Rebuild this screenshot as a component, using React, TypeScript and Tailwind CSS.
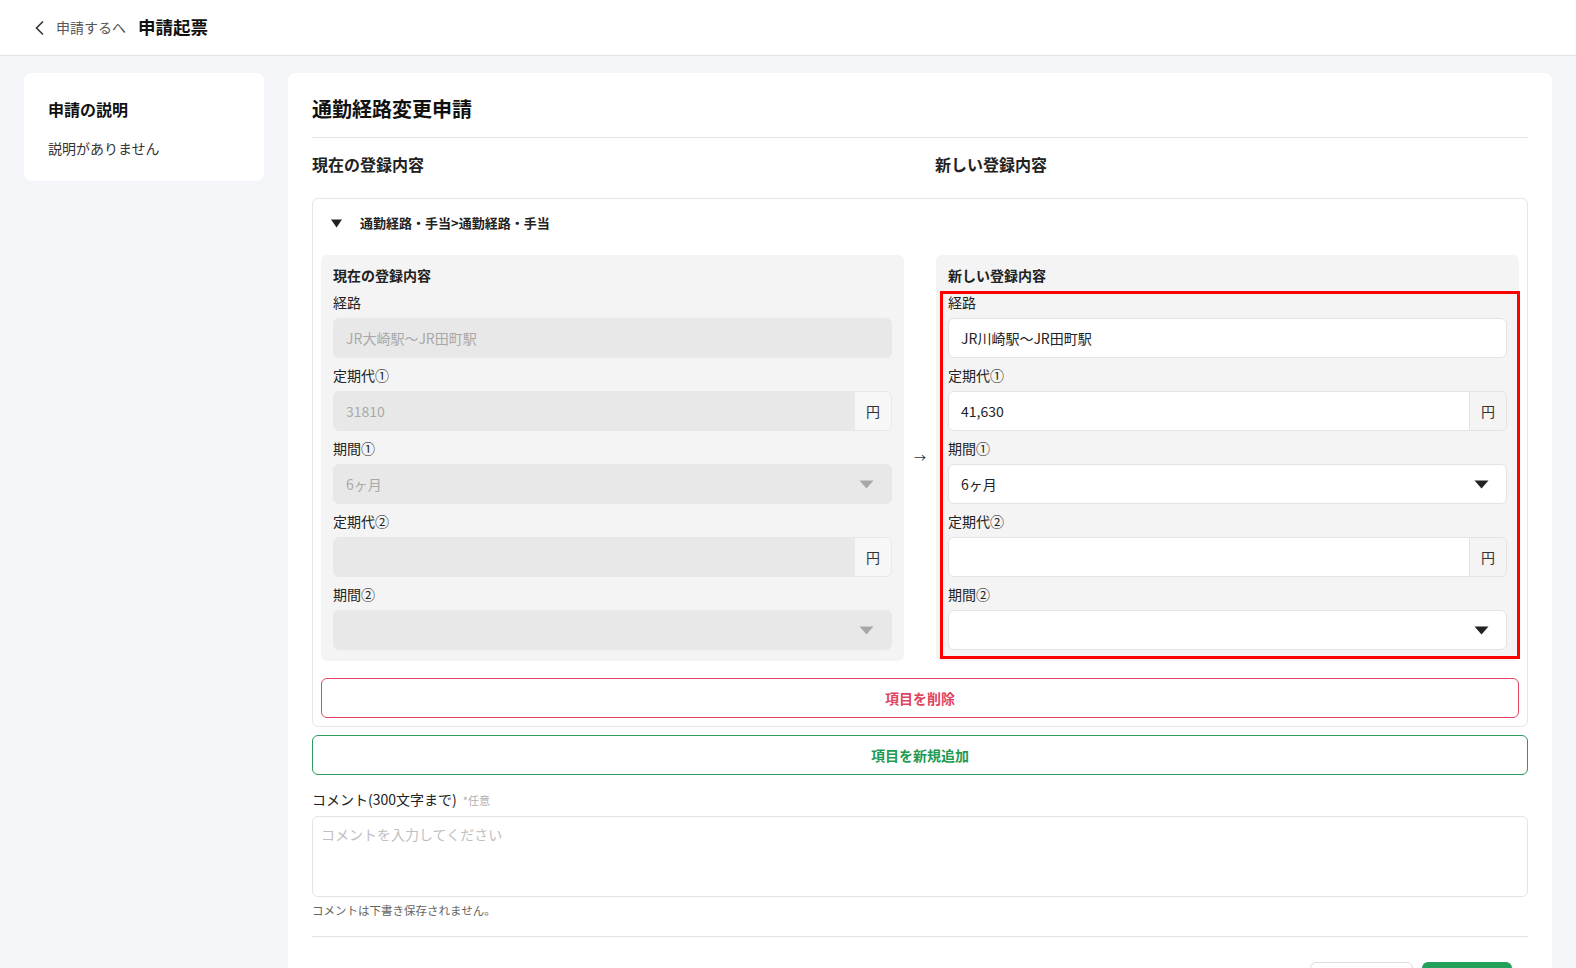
import React from 'react';

// Shared font stack for the page
const font = { fontFamily: '"Noto Sans CJK JP", "Noto Sans", sans-serif' };

interface FieldProps {
  label: string;
  children: React.ReactNode;
}

const Field: React.FC<FieldProps> = ({ label, children }) => (
  <div className="flex flex-col">
    <div className="h-5 text-[14px] leading-5 text-[#222]">{label}</div>
    <div className="mt-1.5">{children}</div>
  </div>
);

const Caret = ({ muted }: { muted?: boolean }) => (
  <svg width="15" height="9" viewBox="0 0 15 9">
    <path d="M0.5 0.5h14L7.5 8.5z" fill={muted ? '#a8a8a8' : '#222'} />
  </svg>
);

const TextBox = ({ value, disabled }: { value: string; disabled?: boolean }) => (
  <div
    className={
      'h-10 rounded-md border flex items-center px-3 text-[14px] ' +
      (disabled ? 'bg-[#e8e8e8] border-[#e8e8e8] text-[#a8a8a8]' : 'bg-white border-[#e3e3e3] text-[#222]')
    }
  >
    {value}
  </div>
);

const YenBox = ({ value, disabled }: { value: string; disabled?: boolean }) => (
  <div
    className={
      'h-10 rounded-md border flex overflow-hidden ' +
      (disabled ? 'border-[#e8e8e8]' : 'border-[#e3e3e3]')
    }
  >
    <div
      className={
        'flex-1 flex items-center px-3 text-[14px] ' +
        (disabled ? 'bg-[#e8e8e8] text-[#a8a8a8]' : 'bg-white text-[#222]')
      }
    >
      {value}
    </div>
    <div
      className={
        'w-[37px] flex items-center justify-center text-[14px] text-[#333] border-l ' +
        (disabled ? 'bg-[#f7f7f7] border-[#e8e8e8]' : 'bg-[#f4f4f4] border-[#e3e3e3]')
      }
    >
      円
    </div>
  </div>
);

const SelectBox = ({ value, disabled }: { value: string; disabled?: boolean }) => (
  <div
    className={
      'h-10 rounded-md border flex items-center justify-between pl-3 pr-[17px] text-[14px] ' +
      (disabled ? 'bg-[#e8e8e8] border-[#e8e8e8] text-[#a8a8a8]' : 'bg-white border-[#e3e3e3] text-[#222]')
    }
  >
    <span>{value}</span>
    <Caret muted={disabled} />
  </div>
);

interface PanelProps {
  title: string;
  disabled?: boolean;
  route: string;
  fare1: string;
  period1: string;
  highlight?: boolean;
}

const RegistrationPanel: React.FC<PanelProps> = ({ title, disabled, route, fare1, period1, highlight }) => (
  <div className="relative bg-[#f4f4f4] rounded-md px-3 pt-2.5 pb-[11px]">
    <div className="h-5 text-[14px] leading-5 font-bold text-[#222]">{title}</div>
    <div className="mt-[7px] flex flex-col gap-[7px]">
      <Field label="経路">
        <TextBox value={route} disabled={disabled} />
      </Field>
      <Field label="定期代①">
        <YenBox value={fare1} disabled={disabled} />
      </Field>
      <Field label="期間①">
        <SelectBox value={period1} disabled={disabled} />
      </Field>
      <Field label="定期代②">
        <YenBox value="" disabled={disabled} />
      </Field>
      <Field label="期間②">
        <SelectBox value="" disabled={disabled} />
      </Field>
    </div>
    {highlight && (
      <div className="pointer-events-none absolute left-1 -right-px top-[36px] bottom-[2px] border-[3px] border-[#ff0000]" />
    )}
  </div>
);

const App: React.FC = () => {
  return (
    <div className="min-h-screen bg-[#f4f5f9]" style={font}>
      {/* top bar */}
      <header className="h-14 bg-white border-b border-[#e3e4ea] flex items-center pl-[34px]">
        <svg width="12" height="16" viewBox="0 0 12 16" className="mr-[10px]">
          <path d="M9 1.5L2.5 8L9 14.5" fill="none" stroke="#333" strokeWidth="1.6" />
        </svg>
        <span className="text-[14px] text-[#555]">申請するへ</span>
        <span className="ml-3 text-[17.5px] font-bold text-[#111]">申請起票</span>
      </header>

      <div className="flex gap-6 px-6 pt-[17px]">
        {/* description card */}
        <aside className="w-[240px] shrink-0 self-start bg-white rounded-lg px-6 pt-[23px] pb-[23px]">
          <h2 className="text-[16px] font-bold text-[#111] leading-[26px]">申請の説明</h2>
          <p className="mt-4 text-[14px] text-[#333] leading-5">説明がありません</p>
        </aside>

        {/* main form card */}
        <main className="flex-1 bg-white rounded-t-lg px-6 pt-[22px]">
          <h1 className="text-[20px] leading-7 font-bold text-[#111] pb-[14px] border-b border-[#e3e3e3]">
            通勤経路変更申請
          </h1>

          <div className="mt-[15px] grid grid-cols-[1fr_584px] pr-[9px]">
            <div className="text-[16px] leading-[22px] font-semibold text-[#222]">現在の登録内容</div>
            <div className="text-[16px] leading-[22px] font-semibold text-[#222]">新しい登録内容</div>
          </div>

          {/* accordion item */}
          <section className="mt-[23px] border border-[#e6e6e6] rounded-md">
            <div className="h-12 flex items-center pl-[18px]">
              <svg width="11" height="9" viewBox="0 0 11 9">
                <path d="M0 0.5h11L5.5 8.5z" fill="#222" />
              </svg>
              <span className="ml-[18px] text-[13px] font-bold text-[#222]">通勤経路・手当&gt;通勤経路・手当</span>
            </div>
            <div className="px-2 pt-2 pb-2">
              <div className="grid grid-cols-[1fr_32px_1fr]">
                <RegistrationPanel
                  title="現在の登録内容"
                  disabled
                  route="JR大崎駅〜JR田町駅"
                  fare1="31810"
                  period1="6ヶ月"
                />
                <div className="flex items-center justify-center text-[12px] text-[#333]">→</div>
                <RegistrationPanel
                  title="新しい登録内容"
                  route="JR川崎駅〜JR田町駅"
                  fare1="41,630"
                  period1="6ヶ月"
                  highlight
                />
              </div>
              <button
                type="button"
                className="mt-[17px] w-full h-10 rounded-md border border-[#e0445e] text-[14px] font-bold text-[#e0445e] bg-white"
              >
                項目を削除
              </button>
            </div>
          </section>

          <button
            type="button"
            className="mt-2 w-full h-10 rounded-md border border-[#2a9b5b] text-[14px] font-bold text-[#1f9a51] bg-white"
          >
            項目を新規追加
          </button>

          {/* comment */}
          <div className="mt-[14px] flex items-baseline">
            <span className="text-[14px] text-[#222]">コメント(300文字まで)</span>
            <span className="ml-1.5 text-[11px] text-[#b0b0b0]">*任意</span>
          </div>
          <div className="mt-1.5 h-[81px] rounded-md border border-[#e3e3e3] px-2 pt-[7px] text-[14px] text-[#c0c0c0]">
            コメントを入力してください
          </div>
          <p className="mt-[5px] text-[11.5px] text-[#666] leading-4">コメントは下書き保存されません。</p>

          <div className="mt-[18px] border-t border-[#e3e3e3]" />

          {/* footer actions, only their top edge shows above the fold */}
          <div className="mt-[25px] flex justify-end gap-[9px] pr-4">
            <button type="button" aria-label="下書き保存" className="w-[103px] h-10 rounded-md border border-[#dcdcdc] bg-white" />
            <button type="button" aria-label="申請" className="w-[90px] h-10 rounded-md bg-[#23a05a]" />
          </div>
        </main>
      </div>
    </div>
  );
};

export default App;
